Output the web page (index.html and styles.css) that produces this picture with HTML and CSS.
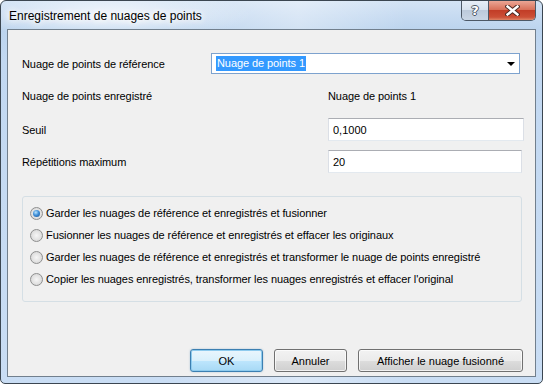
FILE: index.html
```html
<!DOCTYPE html>
<html lang="fr">
<head>
  <meta charset="UTF-8" />
  <meta name="viewport" content="width=device-width, initial-scale=1.0" />
  <title>Enregistrement de nuages de points</title>
  <link rel="stylesheet" href="styles.css">
</head>
<body>
  <div class="window">
    <div class="titlebar">
      <span class="title">Enregistrement de nuages de points</span>
      <div class="caption">
        <button class="cap-help" title="Aide">?</button>
        <button class="cap-close" title="Fermer">
          <svg width="15" height="11" viewBox="0 0 15 11">
            <path d="M2.5 1.5 L12.5 9.5 M12.5 1.5 L2.5 9.5" stroke="#4a2a24" stroke-width="4.4" stroke-linecap="square" fill="none"/>
            <path d="M2.5 1.5 L12.5 9.5 M12.5 1.5 L2.5 9.5" stroke="#fff" stroke-width="2.4" stroke-linecap="square" fill="none"/>
          </svg>
        </button>
      </div>
    </div>

    <div class="client">
      <div class="form">
        <div class="row row-combo">
          <label class="label label-short">Nuage de points de référence</label>
          <div class="combo">
            <span class="combo-sel">Nuage de points 1</span>
            <span class="combo-arrow"></span>
          </div>
        </div>
        <div class="row row-text">
          <span class="label label-long">Nuage de points enregistré</span>
          <span class="value">Nuage de points 1</span>
        </div>
        <div class="row row-input">
          <label class="label label-long">Seuil</label>
          <input class="field field-wide" type="text" value="0,1000">
        </div>
        <div class="row row-input">
          <label class="label label-long">Répétitions maximum</label>
          <input class="field" type="text" value="20">
        </div>
      </div>

      <div class="options">
        <label class="option"><input type="radio" name="mode" checked> Garder les nuages de référence et enregistrés et fusionner</label>
        <label class="option"><input type="radio" name="mode"> Fusionner les nuages de référence et enregistrés et effacer les originaux</label>
        <label class="option"><input type="radio" name="mode"> Garder les nuages de référence et enregistrés et transformer le nuage de points enregistré</label>
        <label class="option"><input type="radio" name="mode"> Copier les nuages enregistrés, transformer les nuages enregistrés et effacer l'original</label>
      </div>

      <div class="buttons">
        <button class="btn btn-default">OK</button>
        <button class="btn">Annuler</button>
        <button class="btn btn-wide">Afficher le nuage fusionné</button>
      </div>
    </div>
  </div>
</body>
</html>
```

FILE: styles.css
```css
html, body {
  margin: 0;
  padding: 0;
  background: #fff;
}
body {
  font-family: 'Liberation Sans', Arial, sans-serif;
  font-size: 11px;
  letter-spacing: -0.08px;
  color: #000;
}
.window {
  box-sizing: border-box;
  width: 543px;
  height: 384px;
  border: 1px solid #3b4651;
  border-radius: 6px 6px 5px 5px;
  background:
    radial-gradient(ellipse 140px 26px at 110px 14px, rgba(255,255,255,0.75), rgba(255,255,255,0) 100%),
    linear-gradient(90deg, rgba(255,255,255,0) 30%, rgba(255,255,255,0.35) 55%, rgba(255,255,255,0) 75%),
    linear-gradient(#d3e3f5 0, #bcd4ee 28px, #c2d8f1 60px, #c9ddf4 100%);
  padding: 0 6px 6px 6px;
  display: flex;
  flex-direction: column;
}
.titlebar {
  height: 28px;
  display: flex;
  justify-content: space-between;
  align-items: flex-start;
}
.title {
  font-size: 12px;
  letter-spacing: 0;
  line-height: 14px;
  margin: 8px 0 0 2px;
  color: #000;
  text-shadow: 0 0 6px #fff, 0 0 8px #fff, 0 0 10px #fff;
}
.caption {
  display: flex;
  height: 19px;
  border: 1px solid #4c5866;
  border-top: none;
  border-radius: 0 0 5px 5px;
  overflow: hidden;
}
.caption button {
  border: none;
  margin: 0;
  padding: 0;
  height: 19px;
  display: flex;
  align-items: center;
  justify-content: center;
}
.cap-help {
  width: 27px;
  border-right: 1px solid #4c5866 !important;
  background: linear-gradient(#e6eef7 0, #d7e2ee 45%, #bccadb 50%, #c9d6e5 100%);
  font-family: 'DejaVu Sans', sans-serif;
  font-weight: bold;
  font-size: 13px;
  color: #fff;
  text-shadow: -1px 0 #4b5765, 1px 0 #4b5765, 0 -1px #4b5765, 0 1px #4b5765;
}
.cap-close {
  width: 46px;
  background: linear-gradient(#eba695 0, #d9715a 45%, #c23d27 50%, #cc4f36 85%, #de8466 100%);
}
.client {
  flex: 1;
  border: 1px solid #717f8d;
  background: #f0f0f0;
  padding: 23px 0 0 14px;
  display: flex;
  flex-direction: column;
}
.form {
  display: flex;
  flex-direction: column;
  gap: 9px;
}
.row {
  display: flex;
  align-items: center;
}
.row-combo {
  height: 21px;
}
.row-text {
  height: 26px;
}
.row-input {
  height: 23px;
}
.label-short {
  width: 189px;
}
.label-long {
  width: 306px;
}
.combo {
  box-sizing: border-box;
  width: 309px;
  height: 21px;
  border: 1px solid #7da2ce;
  background: #fff;
  display: flex;
  align-items: center;
  justify-content: space-between;
  padding: 0 4px 0 4px;
}
.combo-sel {
  background: #3399ff;
  color: #fff;
  line-height: 15px;
  padding: 0 1px;
}
.combo-arrow {
  width: 0;
  height: 0;
  border-left: 4px solid transparent;
  border-right: 4px solid transparent;
  border-top: 4px solid #000;
}
.field {
  box-sizing: border-box;
  width: 194px;
  height: 23px;
  border: 1px solid #dbdfe6;
  border-top-color: #abadb3;
  border-bottom-color: #e3e9ef;
  background: #fff;
  font-family: inherit;
  font-size: 11px;
  padding: 0 4px;
  margin: 0;
  outline: none;
}
.field-wide {
  width: 196px;
}
.options {
  box-sizing: border-box;
  width: 500px;
  margin-top: 23px;
  border: 1px solid #d5dfe5;
  border-radius: 3px;
  padding: 5px 0 11px 7px;
  display: flex;
  flex-direction: column;
}
.option {
  height: 22px;
  display: flex;
  align-items: center;
}
.option input {
  appearance: none;
  -webkit-appearance: none;
  box-sizing: border-box;
  width: 13px;
  height: 13px;
  margin: 0 3px 0 0;
  border: 1px solid #8e8f8f;
  border-radius: 50%;
  background: radial-gradient(circle at 50% 50%, #f6f6f6 0, #e2e2e2 55%, #cfcfcf 100%);
  position: relative;
}
.option input:checked::after {
  content: '';
  position: absolute;
  left: 2px;
  top: 2px;
  width: 7px;
  height: 7px;
  border-radius: 50%;
  background: radial-gradient(circle at 40% 35%, #b9e5ff 0, #3f8fd8 45%, #164f91 100%);
}
.buttons {
  display: flex;
  justify-content: flex-end;
  gap: 11px;
  margin-top: 47px;
  padding-right: 12px;
}
.btn {
  box-sizing: border-box;
  width: 73px;
  height: 23px;
  border: 1px solid #707070;
  border-radius: 3px;
  background: linear-gradient(#f2f2f2 0, #ebebeb 50%, #dddddd 51%, #cfcfcf 100%);
  box-shadow: inset 0 0 0 1px rgba(255,255,255,0.7);
  font-family: inherit;
  font-size: 11px;
  color: #000;
  padding: 0;
  margin: 0;
}
.btn-wide {
  width: 165px;
}
.btn-default {
  border-color: #3c7fb1;
  background: linear-gradient(#eaf6fd 0, #d9f0fc 50%, #bee6fd 51%, #a7d9f5 100%);
  box-shadow: inset 0 0 0 1px #8ecbee, 0 0 2px rgba(60,127,177,0.4);
}
```
